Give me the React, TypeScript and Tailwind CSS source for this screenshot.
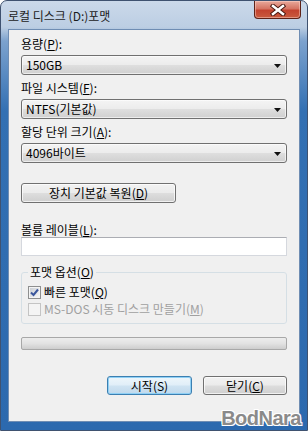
const FONT = "font-['Noto_Sans_CJK_KR',_'Liberation_Sans',_sans-serif]"

function Mn({ children }: { children: string }) {
  return <span className="underline underline-offset-[1px]">{children}</span>
}

function Combo({ value }: { value: string }) {
  return (
    <div className="h-[20px] flex items-center justify-between rounded-[3px] border border-[#707070] bg-[linear-gradient(180deg,#f4f4f4_0%,#ececec_48%,#dedede_52%,#d0d0d0_100%)] pl-[4px] pr-[5px] shadow-[inset_0_0_0_1px_rgba(255,255,255,0.6)]">
      <span className="text-[12px] leading-[14px] text-black">{value}</span>
      <svg width="7" height="4" viewBox="0 0 7 4" className="mt-[1px]">
        <path d="M0 0H7L3.5 4Z" fill="#111" />
      </svg>
    </div>
  )
}

function Label({ children }: { children: React.ReactNode }) {
  return <div className="text-[12px] leading-[14px] text-black">{children}</div>
}

function CheckRow({ checked, disabled, children }: { checked?: boolean; disabled?: boolean; children: React.ReactNode }) {
  return (
    <div className="h-[14px] flex items-center gap-[3px]">
      {checked ? (
        <div className="w-[13px] h-[13px] border border-[#8e8f8f] bg-[#f4f4f4] p-[1px]">
          <div className="w-full h-full bg-[linear-gradient(135deg,#cbcfd5,#f6f6f6)] flex items-center justify-center">
            <svg width="9" height="9" viewBox="0 0 9 9">
              <path d="M1 4.5L3.5 7L8 1.5" stroke="#3b579d" strokeWidth="2" fill="none" />
            </svg>
          </div>
        </div>
      ) : (
        <div className={`w-[13px] h-[13px] border ${disabled ? 'border-[#c4c4c4] bg-[#f4f4f4]' : 'border-[#8e8f8f] bg-white'}`} />
      )}
      <span className={`text-[12px] leading-[14px] ${disabled ? 'text-[#a0a0a0]' : 'text-black'}`}>{children}</span>
    </div>
  )
}

export default function App() {
  return (
    <div className={`${FONT} relative w-[308px] h-[431px] overflow-hidden rounded-t-[7px] border border-[#3f5270] bg-[linear-gradient(180deg,#cbd9ea_0px,#bccee3_26px,#7ca2ce_40px,#3370b3_110px,#2c69ae_100%)] flex flex-col`}>
      {/* title bar */}
      <div className="h-[28px] flex items-start justify-between pl-[7px] pr-[6px]">
        <div className="pt-[8px] text-[12px] leading-[14px] text-[#1b1b1b]">로컬 디스크 (D:)포맷</div>
        <div className="w-[47px] h-[18px] rounded-b-[4px] border border-t-0 border-[#5e2218] bg-[linear-gradient(180deg,#e9a99b_0%,#d57463_45%,#c3432f_55%,#c95b3f_100%)] shadow-[inset_0_0_0_1px_rgba(255,220,210,0.45)] flex items-center justify-center">
          <svg width="16" height="12" viewBox="0 0 16 12">
            <path d="M3 2L13 10M13 2L3 10" stroke="#4b1a12" strokeWidth="4.5" strokeLinecap="square" />
            <path d="M3 2L13 10M13 2L3 10" stroke="#ffffff" strokeWidth="2.5" strokeLinecap="square" />
          </svg>
        </div>
      </div>

      {/* client area */}
      <div className="mx-[7px] mb-[8px] flex-1 border border-[#6f8db3] bg-[#f0f0f0] pl-[12px] pr-[12px] pt-[7px] flex flex-col">
        <Label>용량(<Mn>P</Mn>):</Label>
        <div className="mt-[4px]"><Combo value="150GB" /></div>

        <div className="mt-[6px]"><Label>파일 시스템(<Mn>F</Mn>):</Label></div>
        <div className="mt-[4px]"><Combo value="NTFS(기본값)" /></div>

        <div className="mt-[6px]"><Label>할당 단위 크기(<Mn>A</Mn>):</Label></div>
        <div className="mt-[4px]"><Combo value="4096바이트" /></div>

        <button className="mt-[20px] w-[155px] h-[20px] rounded-[3px] border border-[#707070] bg-[linear-gradient(180deg,#f2f2f2_0%,#ebebeb_48%,#dddddd_52%,#cfcfcf_100%)] shadow-[inset_0_0_0_1px_rgba(255,255,255,0.7)] text-[12px] leading-[14px] text-black">
          장치 기본값 복원(<Mn>D</Mn>)
        </button>

        <div className="mt-[20px]"><Label>볼륨 레이블(<Mn>L</Mn>):</Label></div>
        <div className="h-[19px] border border-[#d5d8de] border-t-[#abadb3] bg-white" />

        <fieldset className="mt-[9px] rounded-[3px] border border-[#d5dfe5] pl-[6px] pb-[7px]">
          <legend className="px-[2px] text-[12px] leading-[14px] text-black">포맷 옵션(<Mn>O</Mn>)</legend>
          <div className="mt-[6px]">
            <CheckRow checked>빠른 포맷(<Mn>Q</Mn>)</CheckRow>
          </div>
          <div className="mt-[3px]">
            <CheckRow disabled>MS-DOS 시동 디스크 만들기(<Mn>M</Mn>)</CheckRow>
          </div>
        </fieldset>

        <div className="mt-[13px] h-[13px] rounded-[2px] border border-[#a8a8a8] bg-[linear-gradient(180deg,#ededed_0%,#e2e2e2_50%,#cdcdcd_100%)]" />

        <div className="mt-[26px] flex justify-end gap-[11px]">
          <button className="w-[85px] h-[19px] rounded-[3px] border border-[#3c7fb1] bg-[linear-gradient(180deg,#eef6fb_0%,#e0eef8_48%,#cfe3f2_52%,#c0d9ec_100%)] shadow-[inset_0_0_0_1px_#8fd0f5] text-[12px] leading-[14px] text-black">
            시작(S)
          </button>
          <button className="w-[84px] h-[19px] rounded-[3px] border border-[#707070] bg-[linear-gradient(180deg,#f2f2f2_0%,#ebebeb_48%,#dddddd_52%,#cfcfcf_100%)] shadow-[inset_0_0_0_1px_rgba(255,255,255,0.7)] text-[12px] leading-[14px] text-black">
            닫기(<Mn>C</Mn>)
          </button>
        </div>
      </div>

      {/* watermark */}
      <div className="absolute right-[6px] bottom-[1px] font-['Liberation_Sans',_sans-serif] text-[20px] leading-[22px] font-black tracking-[-0.5px] text-[#8a8a8a] [text-shadow:1px_1px_0_#ffffff,-1px_-1px_0_#ffffff,1px_-1px_0_#ffffff,-1px_1px_0_#ffffff]">
        BodNara
      </div>
    </div>
  )
}
